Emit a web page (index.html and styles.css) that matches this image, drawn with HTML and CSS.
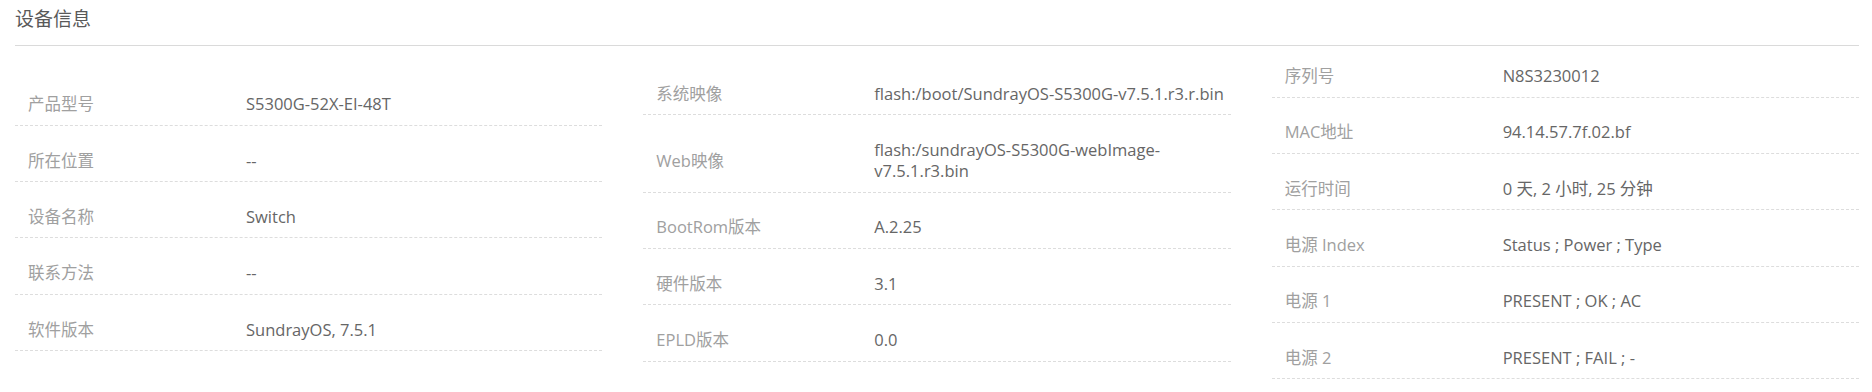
FILE: index.html
```html
<!DOCTYPE html>
<html lang="zh-CN">
<head>
<meta charset="utf-8">
<title>设备信息</title>
<link rel="stylesheet" href="styles.css">
</head>
<body>
<div class="panel">
  <div class="panel-title">设备信息</div>
  <div class="info-grid">
    <div class="info-col">
      <div class="info-row"><span class="info-label">产品型号</span><span class="info-value">S5300G-52X-EI-48T</span></div>
      <div class="info-row"><span class="info-label">所在位置</span><span class="info-value">--</span></div>
      <div class="info-row"><span class="info-label">设备名称</span><span class="info-value">Switch</span></div>
      <div class="info-row"><span class="info-label">联系方法</span><span class="info-value">--</span></div>
      <div class="info-row"><span class="info-label">软件版本</span><span class="info-value">SundrayOS, 7.5.1</span></div>
    </div>
    <div class="info-col">
      <div class="info-row"><span class="info-label">系统映像</span><span class="info-value info-value-nowrap">flash:/boot/SundrayOS-S5300G-v7.5.1.r3.r.bin</span></div>
      <div class="info-row"><span class="info-label">Web映像</span><span class="info-value">flash:/sundrayOS-S5300G-webImage-v7.5.1.r3.bin</span></div>
      <div class="info-row"><span class="info-label">BootRom版本</span><span class="info-value">A.2.25</span></div>
      <div class="info-row"><span class="info-label">硬件版本</span><span class="info-value">3.1</span></div>
      <div class="info-row"><span class="info-label">EPLD版本</span><span class="info-value">0.0</span></div>
    </div>
    <div class="info-col">
      <div class="info-row"><span class="info-label">序列号</span><span class="info-value">N8S3230012</span></div>
      <div class="info-row"><span class="info-label">MAC地址</span><span class="info-value">94.14.57.7f.02.bf</span></div>
      <div class="info-row"><span class="info-label">运行时间</span><span class="info-value">0 天, 2 小时, 25 分钟</span></div>
      <div class="info-row"><span class="info-label">电源 Index</span><span class="info-value">Status ; Power ; Type</span></div>
      <div class="info-row"><span class="info-label">电源 1</span><span class="info-value">PRESENT ; OK ; AC</span></div>
      <div class="info-row"><span class="info-label">电源 2</span><span class="info-value">PRESENT ; FAIL ; -</span></div>
    </div>
  </div>
</div>
</body>
</html>
```

FILE: styles.css
```css
html, body {
  margin: 0;
  padding: 0;
  background: #ffffff;
}

body {
  font-family: "Open Sans", "Noto Sans CJK SC", sans-serif;
}

.panel {
  padding: 0 13px 0 15px;
}

.panel-title {
  font-size: 19px;
  line-height: 38px;
  color: #595959;
  padding-bottom: 7px;
  border-bottom: 1px solid #dadada;
}

.info-grid {
  display: grid;
  grid-template-columns: repeat(3, 1fr);
  column-gap: 41px;
  align-items: center;
  margin-top: 9px;
}

.info-col {
  display: flex;
  flex-direction: column;
  gap: 13.85px;
}

.info-row {
  display: grid;
  grid-template-columns: 218px 1fr;
  align-items: center;
  padding: 10px 0 10.5px 13px;
  border-bottom: 1px dashed #dddddd;
  font-size: 16.5px;
  line-height: 21px;
}

.info-label {
  color: #a0a0a0;
}

.info-value {
  color: #666666;
}

.info-value-nowrap {
  white-space: nowrap;
}
```
